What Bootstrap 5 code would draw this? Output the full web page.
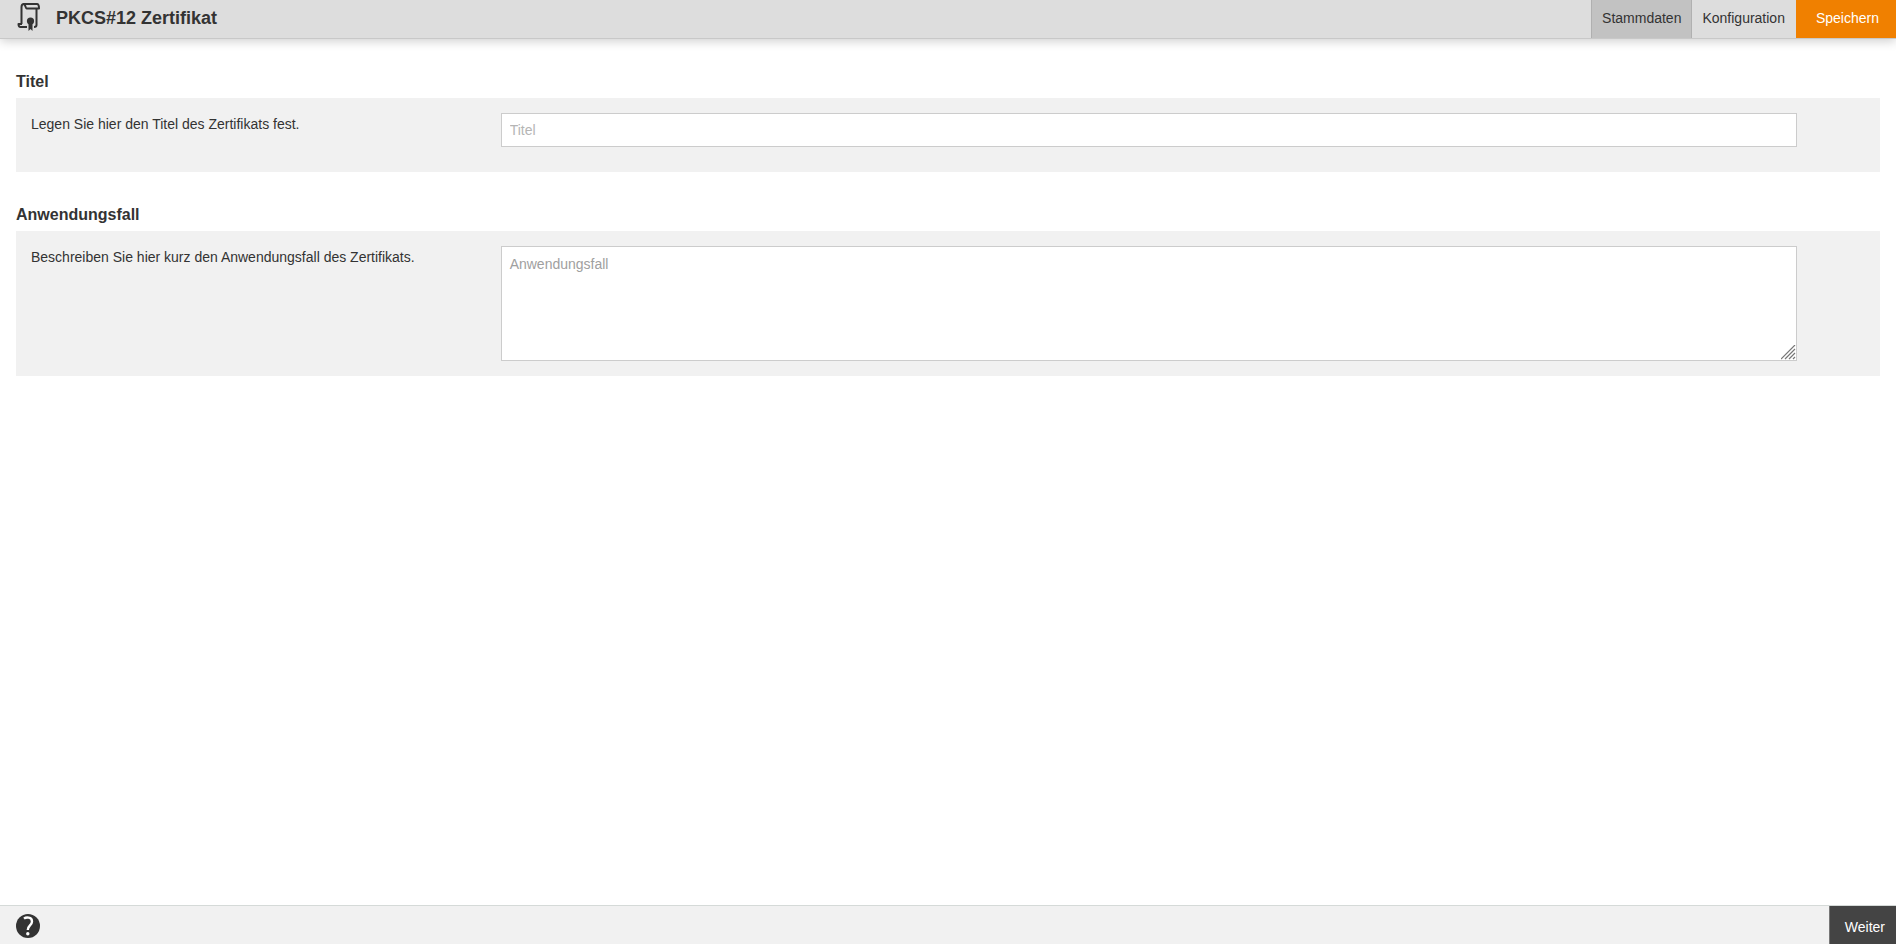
<!DOCTYPE html>
<html lang="de">
<head>
<meta charset="utf-8">
<meta name="viewport" content="width=device-width, initial-scale=1">
<title>PKCS#12 Zertifikat</title>
<link href="https://cdn.jsdelivr.net/npm/bootstrap@5.3.0/dist/css/bootstrap.min.css" rel="stylesheet">
<style>
  body { font-family: "Liberation Sans", Arial, sans-serif; font-size: 14px; line-height: 20px; color: #333; }
  .topbar { background: #ddd; border-bottom: 1px solid #c8c8c8; box-shadow: 0 2px 10px rgba(0,0,0,.2); }
  .topbar h1 { font-size: 18px; line-height: 36px; }
  .bar-btn { font-size: 14px; line-height: 36px; height: 38px; border: 0; border-radius: 0; padding: 0 10px 2px; color: #333; }
  .bar-btn:hover { color: #000; }
  .tab-current { background: #c2c2c2; border-left: 1px solid #b0b0b0; border-right: 1px solid #b0b0b0; }
  .tab-next { padding-right: 11px; }
  .btn-save { background: #f08000; color: #fff; padding-left: 20px; padding-right: 17px; }
  .btn-save:hover { background: #d87300; color: #fff; }
  .content { padding: 31px 16px 0; }
  .form-block { margin-bottom: 31px; }
  .form-block h2 { font-size: 16px; line-height: 24px; margin-bottom: 4px; }
  .panel { background: #f1f1f1; padding: 15px 0; }
  .label-col { width: 26%; padding: 1px 0 0 15px; }
  .field-col { width: 69.55%; }
  .panel .form-control { font-size: 14px; line-height: 20px; color: #333; border: 1px solid #ccc; border-radius: 0; padding: 6px 8px; }
  .panel .form-control::placeholder { color: #b5b5b5; }
  .panel input.form-control { height: 34px; margin-bottom: 10px; }
  .panel textarea.form-control { height: 115px; padding-top: 7px; }
  .panel textarea.form-control::placeholder { color: #a0a0a0; }
  textarea::-webkit-resizer { background: url("data:image/svg+xml,%3Csvg xmlns='http://www.w3.org/2000/svg' width='15' height='15'%3E%3Cpath d='M0 14 14 0M4 14 14 4M8 14 14 8M12 14 14 12' stroke='%23777' stroke-width='1.2'/%3E%3C/svg%3E") no-repeat right bottom; }
  .bottombar { background: #f1f1f1; border-top: 1px solid #d5dad8; }
  .help-btn { margin-top: 2px; }
  .btn-next { background: #444; color: #fff; border-left: 1px solid #777; padding: 3px 11px 0 15px; }
  .btn-next:hover { background: #222; color: #fff; }
</style>
</head>
<body class="d-flex flex-column min-vh-100">
<header class="topbar d-flex align-items-start">
  <svg class="ms-3 flex-shrink-0" width="24" height="32" viewBox="0 0 24 32" fill="none" stroke="#333" stroke-width="2" aria-hidden="true">
    <path d="M11 27H4.500C3 27 2.500 26 2.500 24H6M5.500 24V7C5.500 5 6 4 8 4H21C23 4 23 6 23 8.500H10.500C9.500 8.500 9.500 4 7.500 4M20.500 8.500V25C20.500 26.500 19.500 27 18 27" stroke-linejoin="round"/>
    <circle cx="14.500" cy="21" r="3.600" fill="#333" stroke="none"/>
    <path d="M12.500 22V31L14.500 29L16.500 31V22Z" fill="#333" stroke="none"/>
  </svg>
  <h1 class="fw-bold mb-0 ms-3">PKCS#12 Zertifikat</h1>
  <nav class="d-flex ms-auto" aria-label="Bereiche">
    <button type="button" class="btn bar-btn tab-current">Stammdaten</button>
    <button type="button" class="btn bar-btn tab-next">Konfiguration</button>
    <button type="submit" form="cert" class="btn bar-btn btn-save">Speichern</button>
  </nav>
</header>
<main class="content flex-grow-1">
  <form id="cert">
    <section class="form-block">
      <h2 class="fw-bold">Titel</h2>
      <div class="panel d-flex">
        <label class="label-col" for="title">Legen Sie hier den Titel des Zertifikats fest.</label>
        <div class="field-col"><input class="form-control" type="text" id="title" placeholder="Titel"></div>
      </div>
    </section>
    <section class="form-block">
      <h2 class="fw-bold">Anwendungsfall</h2>
      <div class="panel d-flex">
        <label class="label-col" for="usecase">Beschreiben Sie hier kurz den Anwendungsfall des Zertifikats.</label>
        <div class="field-col"><textarea class="form-control d-block" id="usecase" placeholder="Anwendungsfall"></textarea></div>
      </div>
    </section>
  </form>
</main>
<footer class="bottombar d-flex align-items-center justify-content-between">
  <button type="button" class="btn help-btn border-0 p-0 ms-3 d-flex" aria-label="Hilfe">
    <svg width="24" height="24" viewBox="0 0 24 24" aria-hidden="true">
      <circle cx="12" cy="12" r="12" fill="#333"/>
      <path d="M8 4.600C10 3 16 2.800 16 7.400C16 11.400 11.600 11.400 11.800 16" fill="none" stroke="#fff" stroke-width="2.400"/>
      <circle cx="11.800" cy="19.800" r="1.700" fill="#fff"/>
    </svg>
  </button>
  <button type="button" class="btn bar-btn btn-next">Weiter</button>
</footer>
<script src="https://cdn.jsdelivr.net/npm/bootstrap@5.3.0/dist/js/bootstrap.bundle.min.js"></script>
</body>
</html>
